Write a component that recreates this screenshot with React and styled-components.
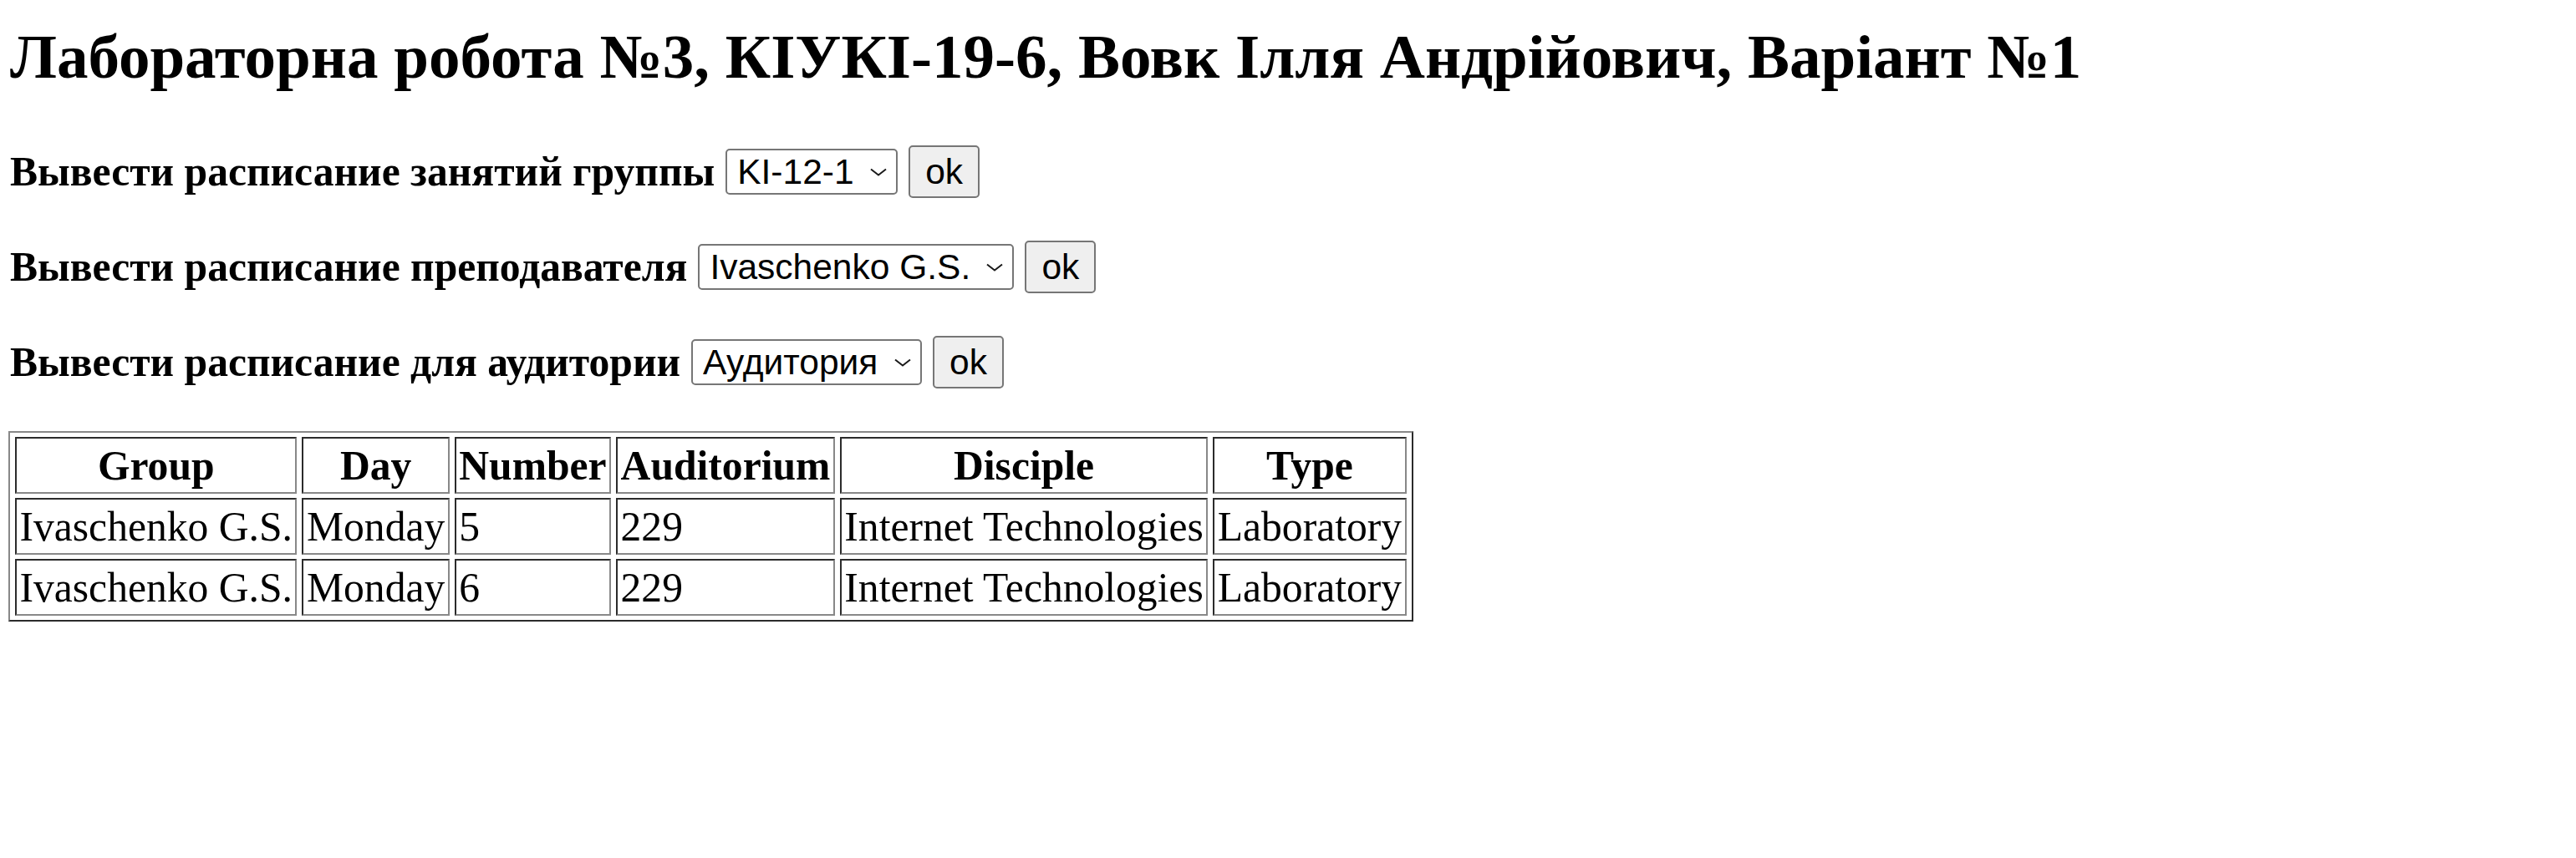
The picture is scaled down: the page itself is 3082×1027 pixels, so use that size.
import React from "react"
import styled, { createGlobalStyle } from "styled-components"

const GlobalStyle = createGlobalStyle`
  html, body {
    margin: 0;
    padding: 0;
    background: #ffffff;
  }
  body {
    font-family: "Liberation Serif", "Times New Roman", serif;
    color: #000000;
  }
`

const groups = ["KI-12-1"]
const teachers = ["Ivaschenko G.S."]
const rooms = ["Аудитория"]

const rows = [
  { group: "Ivaschenko G.S.", day: "Monday", number: "5", room: "229", disciple: "Internet Technologies", type: "Laboratory" },
  { group: "Ivaschenko G.S.", day: "Monday", number: "6", room: "229", disciple: "Internet Technologies", type: "Laboratory" },
]

const Chevron = () => (
  <svg width="20" height="10" viewBox="0 0 20 10" fill="none">
    <path d="M1 1.5 L10 8.5 L19 1.5" stroke="#1a1a1a" strokeWidth="2" strokeLinejoin="miter" />
  </svg>
)

const QueryRow = ({ label, options }) => (
  <Form onSubmit={e => e.preventDefault()}>
    <Label>{label}</Label>
    <SelectWrap>
      <Select defaultValue={options[0]}>
        {options.map(o => (
          <option key={o}>{o}</option>
        ))}
      </Select>
      <ArrowBox>
        <Chevron />
      </ArrowBox>
    </SelectWrap>
    <OkButton type="submit">ok</OkButton>
  </Form>
)

const App = () => {
  return (
    <>
      <GlobalStyle />
      <Page>
        <Title>Лабораторна робота №3, КІУКІ-19-6, Вовк Ілля Андрійович, Варіант №1</Title>
        <Queries>
          <QueryRow label="Вывести расписание занятий группы" options={groups} />
          <QueryRow label="Вывести расписание преподавателя" options={teachers} />
          <QueryRow label="Вывести расписание для аудитории" options={rooms} />
        </Queries>
        <Schedule>
          <thead>
            <tr>
              <Th>Group</Th>
              <Th>Day</Th>
              <Th>Number</Th>
              <Th>Auditorium</Th>
              <Th>Disciple</Th>
              <Th>Type</Th>
            </tr>
          </thead>
          <tbody>
            {rows.map((r, i) => (
              <tr key={i}>
                <Td>{r.group}</Td>
                <Td>{r.day}</Td>
                <Td>{r.number}</Td>
                <Td>{r.room}</Td>
                <Td>{r.disciple}</Td>
                <Td>{r.type}</Td>
              </tr>
            ))}
          </tbody>
        </Schedule>
      </Page>
    </>
  )
}

export default App

const Page = styled.div`
  padding: 27px 10px 40px 10px;
`

const Title = styled.h2`
  margin: 0;
  font-size: 75px;
  font-weight: 700;
  line-height: 82px;
  padding-left: 2px;
`

const Queries = styled.div`
  display: flex;
  flex-direction: column;
  gap: 51px;
  margin-top: 65px;
`

const Form = styled.form`
  display: flex;
  align-items: center;
  height: 63px;
  padding-left: 2px;
`

const Label = styled.span`
  font-size: 49.6px;
  font-weight: 700;
  margin-right: 13px;
  white-space: nowrap;
`

const SelectWrap = styled.div`
  position: relative;
  display: inline-flex;
  margin-right: 13px;
`

const Select = styled.select`
  appearance: none;
  -webkit-appearance: none;
  box-sizing: border-box;
  height: 55px;
  margin: 0;
  padding: 0 50px 0 12px;
  font-family: "Liberation Sans", Arial, sans-serif;
  font-size: 42.5px;
  color: #000000;
  background: #ffffff;
  border: 2px solid #767676;
  border-radius: 5px;
  outline: none;
`

const ArrowBox = styled.span`
  position: absolute;
  right: 13px;
  top: 50%;
  transform: translateY(-50%);
  display: flex;
  pointer-events: none;
`

const OkButton = styled.button`
  box-sizing: border-box;
  height: 63px;
  padding: 0 18px;
  font-family: "Liberation Sans", Arial, sans-serif;
  font-size: 42.5px;
  color: #000000;
  background: #efefef;
  border: 2px solid #767676;
  border-radius: 5px;
`

const Schedule = styled.table`
  margin-top: 51px;
  border-collapse: separate;
  border-spacing: 6px 5px;
  border: 2px solid;
  border-color: #888888 #2b2b2b #2b2b2b #888888;
  font-size: 49.6px;
`

const Th = styled.th`
  padding: 3.5px;
  font-weight: 700;
  text-align: center;
  border: 2px solid;
  border-color: #2b2b2b #888888 #888888 #2b2b2b;
`

const Td = styled.td`
  padding: 3.5px;
  text-align: left;
  border: 2px solid;
  border-color: #2b2b2b #888888 #888888 #2b2b2b;
`
